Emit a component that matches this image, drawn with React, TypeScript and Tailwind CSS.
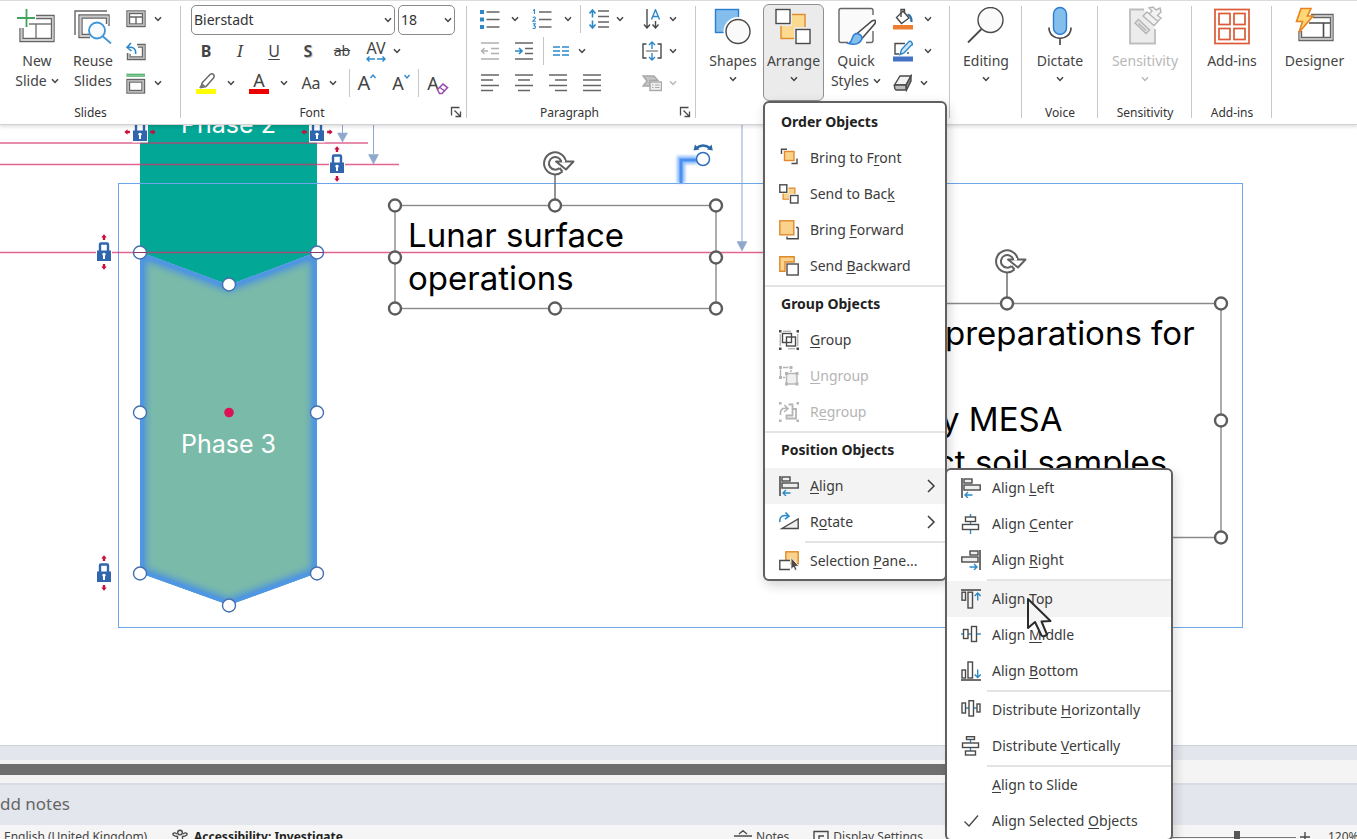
import type { ReactNode } from "react";

const ink = "#4a4a4a";
const blue = "#2b88c9";

function Icon({ box, w, h, children }: { box: string; w: number; h: number; children: ReactNode }) {
  return (
    <svg viewBox={box} width={w} height={h} fill="none" stroke={ink} strokeWidth="1.4" className="shrink-0" aria-hidden="true">
      {children}
    </svg>
  );
}

function Caret({ className = "" }: { className?: string }) {
  return (
    <span className={`inline-flex h-4 shrink-0 items-center justify-center ${className}`}>
      <svg viewBox="0 0 8 6" width="8" height="6" fill="none" stroke="currentColor" strokeWidth="1.5" aria-hidden="true">
        <path d="M1 1.2L4 4.4L7 1.2" />
      </svg>
    </span>
  );
}

function Tool({ label, className = "", children }: { label: string; className?: string; children: ReactNode }) {
  return (
    <button type="button" aria-label={label} className={`flex h-7 shrink-0 items-center justify-center ${className}`}>
      {children}
    </button>
  );
}

function Divider({ className = "" }: { className?: string }) {
  return <span className={`h-7 w-px shrink-0 bg-[#c6c6c6] ${className}`} />;
}

function Group({ name, className = "", launcher, children }: { name?: string; className?: string; launcher?: string; children: ReactNode }) {
  return (
    <section className={`relative flex shrink-0 flex-col pt-0.5 ${className}`}>
      <div className="flex h-24">{children}</div>
      <div className={`mt-1 h-5 text-center text-xs leading-5 text-[#333] ${launcher ? "pr-6" : ""}`}>{name}</div>
      {launcher && <Launcher label={launcher} />}
      <span className="absolute right-0 top-[5px] h-28 w-px bg-[#c8c8c8]" />
    </section>
  );
}

function BigButton({ icon, children, pressed = false, className = "" }: { icon: ReactNode; children: ReactNode; pressed?: boolean; className?: string }) {
  return (
    <button
      type="button"
      className={`flex shrink-0 flex-col items-center rounded-md text-sm leading-5 ${pressed ? "h-[97px] border border-[#8f8f8f] bg-[#ebebeb] pt-[3px]" : "h-24 pt-[5px]"} ${className}`}
    >
      <span className="flex h-9 items-center justify-center">{icon}</span>
      <span className="mt-[7px] flex flex-col items-center whitespace-nowrap">{children}</span>
    </button>
  );
}

/* ---------- menu parts ---------- */

function MenuItem({ icon, children, disabled = false, active = false, arrow = false }: { icon?: ReactNode; children: ReactNode; disabled?: boolean; active?: boolean; arrow?: boolean }) {
  return (
    <button
      type="button"
      role="menuitem"
      disabled={disabled}
      className={`flex h-9 w-full items-center gap-[11px] whitespace-nowrap pl-3.5 pr-[9px] text-left text-sm ${disabled ? "text-[#b4b4b4]" : "text-[#3c3c3c]"} ${active ? "bg-[#f3f3f3]" : ""}`}
    >
      <span className="flex h-5 w-5 shrink-0 items-center">{icon}</span>
      <span className="grow">{children}</span>
      {arrow && (
        <svg viewBox="0 0 10 14" width="10" height="14" fill="none" stroke="#3c3c3c" strokeWidth="1.5" aria-hidden="true">
          <path d="M2 1L8 7L2 13" />
        </svg>
      )}
    </button>
  );
}

function MenuHeading({ children }: { children: ReactNode }) {
  return <div className="flex h-[35px] items-center px-4 pb-0.5 text-sm font-bold text-[#222]">{children}</div>;
}

function MenuLine({ inset = false }: { inset?: boolean }) {
  return (
    <div className={`flex h-[3px] items-center ${inset ? "pl-10" : ""}`}>
      <span className="h-0.5 w-full bg-[#e4e4e4]" />
    </div>
  );
}

function K({ children }: { children: ReactNode }) {
  return <span className="underline underline-offset-2">{children}</span>;
}

function M({ children, color = ink }: { children: ReactNode; color?: string }) {
  return (
    <svg viewBox="0 0 20 20" width="20" height="20" fill="none" stroke={color} strokeWidth="1.4" aria-hidden="true">
      {children}
    </svg>
  );
}

const orangeFill = "#fbd28b";
const orange = "#e08a2c";

const icons = {
  front: (
    <M>
      <path d="M2.5 6V1.2H8M18 10.500V15.500H12.500" />
      <rect x="5.500" y="3.500" width="9.500" height="9" fill={orangeFill} stroke={orange} />
    </M>
  ),
  back: (
    <M>
      <path d="M9.5 4.200H15.800V10M4.200 9.500V15H10" stroke={orange} />
      <path d="M9.500 4.800H15.200V10H10V14.500H4.800V9.500H9.500z" fill={orangeFill} stroke="none" />
      <rect x="0.8" y="0.8" width="7" height="7.5" fill="#fff" />
      <rect x="11.5" y="11.5" width="7.5" height="7.5" fill="#fff" />
    </M>
  ),
  forward: (
    <M>
      <path d="M19.200 7.500V18.800H8V16.500M19.200 7.500H17" />
      <rect x="0.8" y="0.8" width="14" height="14" fill={orangeFill} stroke={orange} />
    </M>
  ),
  backward: (
    <M>
      <path d="M0.800 0.800H15.200V6H6V15.200H0.800z" fill={orangeFill} stroke={orange} />
      <rect x="8" y="8" width="11.200" height="11" fill="#fff" />
    </M>
  ),
  group: (
    <M>
      <path d="M4 1.200H12M1.200 4V16M18.800 4V16M9 18.800H16" strokeWidth="1" stroke="#9a9a9a" />
      <rect x="3.500" y="3.500" width="9" height="9" />
      <rect x="7.500" y="7" width="9" height="9" />
      <path d="M0 0h2.500v2.500H0zM17.500 0H20v2.500h-2.500zM0 17.500h2.500V20H0zM17.500 17.500H20V20h-2.500z" fill={ink} stroke="none" />
    </M>
  ),
  ungroup: (
    <M color="#b4b4b4">
      <path d="M1.500 3.500V10M4 1.500H9.500M12 4V6M4 11.500H6" />
      <rect x="7.500" y="7.500" width="10.500" height="10.500" fill="#f0f0f0" />
      <path d="M0 0h3v3H0zM10.500 0h3v3h-3zM0 10h3v3H0zM6 16.500h3v3H6zM16.500 6h3v3h-3zM16.500 16.500h3v3h-3zM6 6h3v3H6z" fill="#b4b4b4" stroke="none" />
    </M>
  ),
  regroup: (
    <M color="#b4b4b4">
      <path d="M9.500 2.500H13.500V7H17V16.500H7.500V13.500H13.500V7" fill="none" strokeWidth="1.800" />
      <path d="M1.500 13C1 7.500 3 5.500 8.500 6.500M5.500 3L9 6.700L5 10" strokeWidth="1.600" />
      <path d="M0 0h2.500v2.500H0zM17.500 0H20v2.500h-2.500zM0 17.500h2.500V20H0zM17.500 17.500H20V20h-2.500z" fill="#b4b4b4" stroke="none" />
    </M>
  ),
  left: (
    <M>
      <path d="M1 0V20" strokeWidth="1.600" />
      <rect x="3" y="1" width="8" height="4" fill="#eee" />
      <rect x="3" y="7" width="16.200" height="5" fill="#eee" />
      <path d="M11.500 17H4M7 14L4 17L7 20" stroke={blue} />
    </M>
  ),
  center: (
    <M>
      <path d="M9.500 0V20" stroke={blue} />
      <rect x="4.500" y="3" width="10" height="4.500" fill="#fff" />
      <rect x="1.500" y="10.500" width="16" height="5" fill="#fff" />
    </M>
  ),
  right: (
    <M>
      <path d="M19 0V20" strokeWidth="1.600" />
      <rect x="9" y="1" width="8" height="4" fill="#eee" />
      <rect x="0.800" y="7" width="16.200" height="5" fill="#eee" />
      <path d="M8.500 17H16M13 14L16 17L13 20" stroke={blue} />
    </M>
  ),
  top: (
    <M>
      <path d="M0 1H20" strokeWidth="1.600" />
      <rect x="1" y="3.200" width="3.500" height="8" />
      <rect x="7" y="3.200" width="4.500" height="15.800" />
      <path d="M16.700 11.500V4M13.700 7L16.700 4L19.700 7" stroke={blue} />
    </M>
  ),
  middle: (
    <M>
      <path d="M0 9H20" stroke={blue} />
      <rect x="2.500" y="4.500" width="4.500" height="9" fill="#fff" />
      <rect x="10.500" y="1.500" width="5" height="15" fill="#fff" />
    </M>
  ),
  bottom: (
    <M>
      <path d="M0 19H20" strokeWidth="1.600" />
      <rect x="1" y="9" width="3.500" height="8" />
      <rect x="7" y="1" width="4.500" height="16" />
      <path d="M16.700 8.500V16.500M13.700 13.500L16.700 16.500L19.700 13.500" stroke={blue} />
    </M>
  ),
  horizontal: (
    <M>
      <path d="M4 8H16" stroke={blue} />
      <rect x="1" y="3" width="3.500" height="10" fill="#fff" />
      <rect x="8" y="0.700" width="4.500" height="15.300" fill="#fff" />
      <rect x="16" y="4" width="3" height="8" fill="#fff" />
    </M>
  ),
  vertical: (
    <M>
      <path d="M9.500 3V16" stroke={blue} />
      <rect x="5.500" y="0.700" width="8" height="2.800" fill="#fff" />
      <rect x="1.500" y="7" width="16" height="4.500" fill="#fff" />
      <rect x="4.500" y="15" width="10" height="4" fill="#fff" />
    </M>
  ),
  rotate: (
    <M>
      <path d="M19.200 7V16.500H3z" fill="#eee" />
      <path d="M1 10C0 4.500 4 2.500 9.500 4M6.500 0.500L10 4.200L6 7.200" stroke={blue} strokeWidth="1.600" />
    </M>
  ),
  pane: (
    <M>
      <rect x="6.800" y="0.800" width="12.400" height="12" fill={orangeFill} stroke={orange} />
      <path d="M11 9.500H0.800V18.500H11" fill="#fff" />
      <path d="M12 6.500V18.500L14.500 16L16 19.500L18 18.500L16.500 15.300H20z" fill={ink} stroke="#fff" strokeWidth="0.800" />
    </M>
  ),
  check: (
    <M>
      <path d="M3.500 10.500L8 15L17 4.500" />
    </M>
  ),
};

function Pointer() {
  return (
    <svg viewBox="0 0 26 42" width="26" height="42" className="pointer-events-none absolute left-[79px] top-4 z-10" aria-hidden="true">
      <path d="M2 2V31L9 25L15.500 38.500Q18 40.500 21 37.500L15.500 24.500L24.500 24z" fill="#f5f5f5" stroke="#2b2b2b" strokeWidth="2" strokeLinejoin="round" />
    </svg>
  );
}

function AlignMenu() {
  return (
    <div role="menu" aria-label="Align" className="absolute left-full top-0 w-[228px] rounded-md border-2 border-[#606060] bg-white shadow-[4px_4px_10px_rgba(0,0,0,0.12)]">
      <MenuItem icon={icons.left}>Align <K>L</K>eft</MenuItem>
      <MenuItem icon={icons.center}>Align <K>C</K>enter</MenuItem>
      <MenuItem icon={icons.right}>Align <K>R</K>ight</MenuItem>
      <MenuLine inset />
      <div className="relative">
        <MenuItem icon={icons.top} active>Align <K>T</K>op</MenuItem>
        <Pointer />
      </div>
      <MenuItem icon={icons.middle}>Align <K>M</K>iddle</MenuItem>
      <MenuItem icon={icons.bottom}>Align <K>B</K>ottom</MenuItem>
      <MenuLine inset />
      <MenuItem icon={icons.horizontal}>Distribute <K>H</K>orizontally</MenuItem>
      <MenuItem icon={icons.vertical}>Distribute <K>V</K>ertically</MenuItem>
      <MenuLine inset />
      <MenuItem><K>A</K>lign to Slide</MenuItem>
      <MenuItem icon={icons.check}>Align Selected <K>O</K>bjects</MenuItem>
    </div>
  );
}

function ArrangeMenu() {
  return (
    <div role="menu" aria-label="Arrange" className="absolute left-0 top-full w-[184px] rounded-md border-2 border-[#606060] bg-white pt-0.5 shadow-[2px_4px_12px_rgba(0,0,0,0.18)]">
      <MenuHeading>Order Objects</MenuHeading>
      <MenuItem icon={icons.front}>Bring to F<K>r</K>ont</MenuItem>
      <MenuItem icon={icons.back}>Send to Bac<K>k</K></MenuItem>
      <MenuItem icon={icons.forward}>Bring <K>F</K>orward</MenuItem>
      <MenuItem icon={icons.backward}>Send <K>B</K>ackward</MenuItem>
      <MenuLine />
      <MenuHeading>Group Objects</MenuHeading>
      <MenuItem icon={icons.group}><K>G</K>roup</MenuItem>
      <MenuItem icon={icons.ungroup} disabled><K>U</K>ngroup</MenuItem>
      <MenuItem icon={icons.regroup} disabled>R<K>e</K>group</MenuItem>
      <MenuLine />
      <MenuHeading>Position Objects</MenuHeading>
      <div className="relative">
        <MenuItem icon={icons.left} active arrow><K>A</K>lign</MenuItem>
        <AlignMenu />
      </div>
      <MenuItem icon={icons.rotate} arrow>R<K>o</K>tate</MenuItem>
      <MenuLine inset />
      <MenuItem icon={icons.pane}>Selection <K>P</K>ane...</MenuItem>
    </div>
  );
}

/* ---------- ribbon ---------- */

function SlidesGroup() {
  return (
    <Group name="Slides" className="w-[181px]">
      <BigButton
        className="ml-[9px] w-14"
        icon={
          <Icon box="17 8 40 36" w={40} h={36}>
            <path d="M36 15.500H54V41.500H20V28M36 18.500H51.500V38.500H23V28" stroke="#666" />
            <path d="M36 17H52.800V40H21.500V28" stroke="#c9c9c9" />
            <path d="M36 24H51M36 24V38M29 24H36" stroke="#777" />
            <path d="M26.500 9V27M17 18H35" stroke="#3fa55b" strokeWidth="1.800" />
          </Icon>
        }
      >
        <span>New</span>
        <span className="flex items-center gap-1">Slide <Caret /></span>
      </BigButton>
      <BigButton
        className="w-14"
        icon={
          <Icon box="74 12 40 36" w={40} h={36}>
            <path d="M76 39V15H108" stroke="#666" />
            <path d="M91 41.500H80V19H110V30M91 38.500H83V22H107.500V28" stroke="#666" />
            <path d="M91 40H81.500V20.500H108.800V28" stroke="#c9c9c9" />
            <circle cx="98" cy="34.500" r="8" fill="#f7fbff" stroke="#3d94d6" strokeWidth="1.800" />
            <path d="M104 40.500L112 47.500" stroke="#3d94d6" strokeWidth="1.800" />
          </Icon>
        }
      >
        <span>Reuse</span>
        <span>Slides</span>
      </BigButton>
      <div className="ml-[3px] flex flex-col">
        <span className="flex h-8 items-center">
          <Tool label="Layout" className="w-6">
            <Icon box="126 10 20 18" w={20} h={18}>
              <rect x="127" y="11" width="18" height="15.500" stroke="#666" />
              <rect x="129.500" y="13.500" width="13" height="10.500" stroke="#666" />
              <rect x="128.200" y="12.200" width="15.600" height="13" stroke="#b9b9b9" />
              <path d="M129.500 17H142.500M136 17V24" stroke="#666" />
            </Icon>
          </Tool>
          <Caret className="w-5" />
        </span>
        <span className="flex h-8 items-center">
          <Tool label="Reset" className="w-6">
            <Icon box="126 41 20 19" w={20} h={19}>
              <path d="M137 43.500H145V58.500H127.500V52M138 46H142.500V56H130V53" stroke="#666" />
              <path d="M138 44.800H143.800V57.200H128.800V52" stroke="#b9b9b9" />
              <path d="M135.500 53C136.500 47.500 133 45.500 127.500 46.500M131 42L127 46.400L131.500 50" stroke={blue} strokeWidth="1.600" />
            </Icon>
          </Tool>
        </span>
        <span className="flex h-8 items-center">
          <Tool label="Section" className="w-6">
            <Icon box="126 73 20 21" w={20} h={21}>
              <path d="M126.500 75.200H145" stroke="#3fa55b" strokeWidth="3" />
              <path d="M126.500 75.200H145" stroke="#9fd5ad" strokeWidth="1" />
              <rect x="127" y="79.500" width="17.500" height="13.500" stroke="#666" />
              <rect x="129.500" y="82" width="12.500" height="8.500" stroke="#666" />
              <rect x="128.200" y="80.700" width="15" height="11" stroke="#b9b9b9" />
            </Icon>
          </Tool>
          <Caret className="w-5" />
        </span>
      </div>
    </Group>
  );
}

function Launcher({ label }: { label: string }) {
  return (
    <button type="button" aria-label={label} className="absolute bottom-1.5 right-[5px]">
      <svg viewBox="0 0 12 12" width="12" height="12" fill="none" stroke={ink} strokeWidth="1.300" aria-hidden="true">
        <path d="M1.500 9.500V1.500H9.500M4.500 4.500L10.500 10.500M10.500 5.500V10.500H5.500" />
      </svg>
    </button>
  );
}

function Picker({ label, value, className }: { label: string; value: string; className: string }) {
  return (
    <label className={`relative flex h-[30px] items-center ${className}`}>
      <select aria-label={label} defaultValue={value} className="h-full w-full appearance-none rounded-[5px] border border-[#8a8a8a] bg-white pl-0.5 text-sm text-[#333]">
        <option>{value}</option>
      </select>
      <Caret className="pointer-events-none absolute right-[3px] w-2" />
    </label>
  );
}

function FontGroup() {
  return (
    <Group name="Font" launcher="Font settings" className="w-[286px]">
      <div className="ml-2 flex w-[270px] flex-col">
        <div className="flex h-8 items-end gap-[3px] pl-0.5">
          <Picker label="Font name" value="Bierstadt" className="w-[204px]" />
          <Picker label="Font size" value="18" className="w-[57px]" />
        </div>
        <div className="flex h-8 items-center text-base">
          <Tool label="Bold" className="w-[34px] font-bold">B</Tool>
          <Tool label="Italic" className="w-[34px] font-['Noto_Serif','Liberation_Serif',serif] italic">I</Tool>
          <Tool label="Underline" className="w-[34px] underline underline-offset-2">U</Tool>
          <Tool label="Text shadow" className="w-[34px] font-semibold [text-shadow:1px_1px_1px_#bbb]">S</Tool>
          <Tool label="Strikethrough" className="w-[34px] text-sm line-through">ab</Tool>
          <Tool label="Character spacing" className="w-[34px] flex-col leading-4">
            <span className="text-base leading-4">AV</span>
            <Icon box="0 0 20 6" w={20} h={6}>
              <path d="M9 3H1M3.500 0.500L1 3L3.500 5.500M11 3H19M16.500 0.500L19 3L16.500 5.500" stroke={blue} />
            </Icon>
          </Tool>
          <Caret className="w-2" />
        </div>
        <div className="flex h-8 items-center text-base">
          <Tool label="Text highlight color" className="w-[34px]">
            <Icon box="196 72 20 23" w={20} h={23}>
              <path d="M202 83L210 74.500Q212 73 213.500 74.500T213.500 78L206 86.500L201 87.500z" fill="#fff" stroke="#666" />
              <path d="M202 83L206 86.500L199 88z" fill="#777" stroke="none" />
              <rect x="196" y="89" width="20" height="5" fill="#ffff00" stroke="none" />
            </Icon>
          </Tool>
          <Caret className="w-4" />
          <Tool label="Font color" className="w-10 flex-col">
            <span className="text-lg leading-[17px]">A</span>
            <span className="h-[5px] w-5 bg-[#ee0000]" />
          </Tool>
          <Caret className="w-2.5" />
          <Tool label="Change case" className="ml-1 w-9">Aa</Tool>
          <Caret className="w-2" />
          <Divider className="ml-3 mr-2" />
          <Tool label="Increase font size" className="w-[18px]">
            <span className="text-xl leading-6">A</span>
            <Icon box="0 0 6 20" w={6} h={20}><path d="M0.500 5L3 2L5.500 5" stroke={blue} /></Icon>
          </Tool>
          <Tool label="Decrease font size" className="ml-4 w-[18px]">
            <span className="text-lg leading-6">A</span>
            <Icon box="0 0 6 20" w={6} h={20}><path d="M0.500 2L3 5L5.500 2" stroke={blue} /></Icon>
          </Tool>
          <Divider className="ml-2 mr-2" />
          <Tool label="Clear formatting" className="relative w-5">
            <span className="-ml-2 text-lg leading-6">A</span>
            <span className="absolute -right-0.5 bottom-0.5">
              <Icon box="0 0 13 13" w={13} h={13}>
                <path d="M1.500 7.500L7 2L11.500 5.500L6 11.500L3.500 11.500z" fill="#fff" stroke="#9b4fb0" strokeWidth="1.600" />
                <path d="M4 5.500L8.500 9" stroke="#9b4fb0" />
              </Icon>
            </span>
          </Tool>
        </div>
      </div>
    </Group>
  );
}

function Lines({ d, color = "#666" }: { d: string; color?: string }) {
  return (
    <Icon box="0 0 20 20" w={20} h={20}>
      <path d={d} stroke={color} strokeWidth="1.600" />
    </Icon>
  );
}

function ParagraphGroup() {
  return (
    <Group name="Paragraph" launcher="Paragraph settings" className="w-[229px]">
      <div className="ml-1.5 flex w-[204px] flex-col">
        <div className="flex h-8 items-center">
          <Tool label="Bullets" className="w-[33px]">
            <Icon box="0 0 20 20" w={20} h={20}>
              <path d="M6.500 3H19.500M6.500 10.500H19.500M6.500 18H19.500" stroke="#666" strokeWidth="1.500" />
              <path d="M0 1h4v4H0zM0 8.500h4v4H0zM0 16h4v4H0z" fill={blue} stroke="none" />
            </Icon>
          </Tool>
          <Caret className="w-[18px]" />
          <Tool label="Numbering" className="w-9">
            <Icon box="0 0 20 20" w={20} h={20}>
              <path d="M7 3H19.500M7 10.500H19.500M7 18H19.500" stroke="#666" strokeWidth="1.500" />
              <path d="M1 1.500L2.500 0.700V5M0.800 8.500Q3.500 7.200 3.300 9.500L0.800 12.300H3.800M0.800 14.800H3.200L2 16.800Q4 17 3.200 18.800T0.700 19.300" stroke={blue} strokeWidth="1.100" />
            </Icon>
          </Tool>
          <Caret className="w-4" />
          <Divider className="mx-1" />
          <Tool label="Line spacing" className="w-7">
            <Icon box="0 0 20 20" w={20} h={20}>
              <path d="M9 2H20M9 7.500H20M9 13H20M9 18H20" stroke="#666" strokeWidth="1.500" />
              <path d="M3.500 8.500V1.500M0.500 4.500L3.500 1L6.500 4.500M3.500 11.500V18.500M0.500 15.500L3.500 19L6.500 15.500" stroke={blue} strokeWidth="1.600" />
            </Icon>
          </Tool>
          <Caret className="w-3.5" />
          <span className="ml-auto flex items-center">
            <Tool label="Text direction" className="w-8">
              <Icon box="0 0 18 20" w={18} h={20}>
                <path d="M4 0V19M1 15.500L4 19L7 15.500M12.500 12V19M9.500 15.500L12.500 19L15.500 15.500" />
                <path d="M8.500 10.500L12.500 0.800L16.500 10.500M10 7.500H15" stroke={blue} />
              </Icon>
            </Tool>
            <Caret className="w-[9px]" />
          </span>
        </div>
        <div className="flex h-8 items-center">
          <Tool label="Decrease indent" className="w-[34px]">
            <Icon box="0 0 20 20" w={20} h={20}>
              <path d="M1 2H19M11 7.500H19M11 12.500H19M1 18H19M8 10H1.500M4.500 7L1.500 10L4.500 13" stroke="#b0b0b0" />
            </Icon>
          </Tool>
          <Tool label="Increase indent" className="w-[33px]">
            <Icon box="0 0 20 20" w={20} h={20}>
              <path d="M1 2H19M11 7.500H19M11 12.500H19M1 18H19" stroke="#666" />
              <path d="M1 10H8M5 7L8 10L5 13" stroke={blue} strokeWidth="1.700" />
            </Icon>
          </Tool>
          <Divider className="mx-[3px]" />
          <Tool label="Columns" className="w-7">
            <Icon box="0 0 16 12" w={16} h={12}>
              <path d="M0 2H7M0 6H7M0 10H7M9 2H16M9 6H16M9 10H16" stroke={blue} strokeWidth="1.600" />
            </Icon>
          </Tool>
          <Caret className="w-3.5" />
          <span className="ml-auto flex items-center">
            <Tool label="Align text" className="w-8">
              <Icon box="0 0 20 20" w={20} h={20}>
                <path d="M4.500 3H1V17H4.500M15.500 3H19V17H15.500" />
                <path d="M4 10H16" stroke="#888" />
                <path d="M10 8V1M7 4L10 1L13 4M10 12V19M7 16L10 19L13 16" stroke={blue} />
              </Icon>
            </Tool>
            <Caret className="w-[9px]" />
          </span>
        </div>
        <div className="flex h-8 items-center">
          <Tool label="Align text left" className="w-[34px]"><Lines d="M1 2H19M1 7H13M1 12.500H19M1 17.500H13" /></Tool>
          <Tool label="Center text" className="w-[34px]"><Lines d="M1 2H19M4 7H16M1 12.500H19M4 17.500H16" /></Tool>
          <Tool label="Align text right" className="w-[34px]"><Lines d="M1 2H19M7 7H19M1 12.500H19M7 17.500H19" /></Tool>
          <Tool label="Justify" className="w-[34px]"><Lines d="M1 2H19M1 7H19M1 12.500H19M1 17.500H19" /></Tool>
          <span className="ml-auto flex items-center text-[#b8b8b8]">
            <Tool label="Convert to SmartArt" className="w-8">
              <Icon box="0 0 20 20" w={20} h={20}>
                <path d="M1 3H12L16 7.500H8V13H1L5 8z" fill="#c4c4c4" stroke="#a8a8a8" />
                <rect x="8" y="9" width="11.500" height="8.500" fill="#eee" stroke="#a8a8a8" />
                <path d="M10 12H11.500M13 12H17.500M10 14.500H11.500M13 14.500H17.500" stroke="#a8a8a8" strokeWidth="1" />
              </Icon>
            </Tool>
            <Caret className="w-[9px]" />
          </span>
        </div>
      </div>
    </Group>
  );
}

function DrawingGroup() {
  return (
    <Group className="w-[254px]">
      <BigButton
        className="ml-[7px] w-[60px]"
        icon={
          <Icon box="714 9 38 38" w={38} h={38}>
            <rect x="715.500" y="11.500" width="23" height="23" fill="#83beec" stroke="#2b7cd3" />
            <circle cx="738" cy="33.500" r="14.500" fill="#fff" stroke="none" />
            <circle cx="738" cy="33.500" r="12" fill="#fafafa" />
          </Icon>
        }
      >
        <span>Shapes</span>
        <Caret />
      </BigButton>
      <div className="relative z-20 mt-px h-[97px]">
        <BigButton
          pressed
          className="w-[61px]"
          icon={
            <Icon box="775 10 37 37" w={37} h={37}>
              <rect x="781" y="16.500" width="24" height="24" fill="#fbd98f" stroke={orange} />
              <path d="M774 9H792V28H774zM794 29H813V48H794z" fill="#ebebeb" stroke="none" />
              <rect x="776" y="11.500" width="14" height="14" fill="#fff" />
              <rect x="796" y="31.500" width="14" height="14" fill="#fff" />
            </Icon>
          }
        >
          <span>Arrange</span>
          <Caret />
        </BigButton>
        <ArrangeMenu />
      </div>
      <BigButton
        className="w-16"
        icon={
          <Icon box="836 10 40 38" w={40} h={38}>
            <path d="M848 45.500H841Q839 45.500 839 43.500V13.500Q839 11.500 841 11.500H871Q873 11.500 873 13.500V18M873 34V43.500Q873 45.500 871 45.500H866" fill="#fafafa" stroke="#666" />
            <path d="M856.500 37L872 24Q876.500 21.500 875 26.500L862 41.500z" fill="#fff" strokeWidth="1.600" />
            <path d="M848.500 46.500C853 45 851 38 856 36.500Q861 36.500 862 41C861 46.500 855 48.500 848.500 46.500z" fill="#83beec" stroke="#2b7cd3" />
          </Icon>
        }
      >
        <span>Quick</span>
        <span className="flex items-center gap-1">Styles <Caret /></span>
      </BigButton>
      <div className="flex flex-col">
        <span className="flex h-8 items-center">
          <Tool label="Shape fill" className="w-[30px]">
            <Icon box="893 8 20 22" w={20} h={22}>
              <path d="M903 11L909 18L901.500 23.500L896.500 17.500z" fill="#fff" />
              <path d="M901 17V9.500H904.500V13" />
              <path d="M907.500 14.500Q911.500 15 911.500 22" stroke="#2b6fa8" strokeWidth="2.200" />
              <rect x="893" y="25" width="20" height="4.500" fill="#ed7d31" stroke="none" />
            </Icon>
          </Tool>
          <Caret className="w-5" />
        </span>
        <span className="flex h-8 items-center">
          <Tool label="Shape outline" className="w-[30px]">
            <Icon box="893 40 20 22" w={20} h={22}>
              <path d="M905 43.500H895V54H899M908 52V54" />
              <path d="M900 54.500L901.500 49.500L909 41.500Q911 40.500 912 43T911.500 45L904 53z" fill="#cfe4f7" stroke={blue} />
              <rect x="893" y="56.500" width="20" height="5" fill="#4472c4" stroke="none" />
            </Icon>
          </Tool>
          <Caret className="w-5" />
        </span>
        <span className="flex h-8 items-center">
          <Tool label="Shape effects" className="w-[30px]">
            <Icon box="893 74 20 18" w={20} h={18}>
              <path d="M894.500 85L900 76H911L906 85z" fill="#f2f2f2" />
              <path d="M906 85L911 76V81L906.500 90z" fill="#888" />
              <path d="M894.500 85H906V90H896Q894.500 89 894.500 87z" fill="#bdbdbd" />
            </Icon>
          </Tool>
          <Caret className="w-3" />
        </span>
      </div>
    </Group>
  );
}

function Ribbon() {
  return (
    <header className="relative z-10 flex h-[125px] shrink-0 border-b border-t border-b-[#d2d2d2] border-t-[#dcdcdc] bg-white text-[#444] shadow-[0_2px_3px_rgba(0,0,0,0.12)]">
      <SlidesGroup />
      <FontGroup />
      <ParagraphGroup />
      <DrawingGroup />
      <Group className="w-[72px]">
        <BigButton
          className="w-full"
          icon={
            <Icon box="966 9 38 38" w={38} h={38}>
              <circle cx="989.500" cy="22" r="12.500" fill="#fafafa" />
              <path d="M980.500 31L967 44.500" strokeWidth="1.800" />
            </Icon>
          }
        >
          <span>Editing</span>
          <Caret />
        </BigButton>
      </Group>
      <Group name="Voice" className="w-[76px]">
        <BigButton
          className="w-full"
          icon={
            <Icon box="1046 8 28 40" w={28} h={40}>
              <rect x="1053.500" y="9.500" width="13" height="27" rx="6.500" fill="#83beec" stroke="#2b7cd3" />
              <path d="M1049 29.500C1049 44 1071 44 1071 29.500M1060 40.500V47" strokeWidth="1.700" />
            </Icon>
          }
        >
          <span>Dictate</span>
          <Caret />
        </BigButton>
      </Group>
      <Group name="Sensitivity" className="w-[94px]">
        <BigButton
          className="w-full text-[#b8b8b8]"
          icon={
            <Icon box="1128 8 38 40" w={38} h={40}>
              <path d="M1146 11.500H1132V45.500H1157V31" fill="#ececec" stroke="#bdbdbd" strokeWidth="1.800" />
              <path d="M1137 25L1140.500 21.500L1151.500 32L1148 35.500z" fill="#e2e2e2" stroke="#b5b5b5" />
              <path d="M1140.500 25.500L1148 32.500" stroke="#b5b5b5" />
              <path d="M1145 18L1149 14L1160 23.500L1156 27.500zM1151 16L1154 13L1151 10L1155 9L1158 12L1162 10L1163 14L1159.500 17.500L1163 20L1160 23" fill="#f2f2f2" stroke="#b5b5b5" />
            </Icon>
          }
        >
          <span>Sensitivity</span>
          <Caret />
        </BigButton>
      </Group>
      <Group name="Add-ins" className="w-20">
        <BigButton
          className="w-full"
          icon={
            <Icon box="1213 9 38 38" w={38} h={38}>
              <g stroke="#dd5a38" strokeWidth="1.700" fill="#fff">
                <rect x="1215" y="11.500" width="34" height="34" />
                <rect x="1219" y="15.500" width="11" height="11" />
                <rect x="1234" y="15.500" width="11" height="11" />
                <rect x="1219" y="30.500" width="11" height="11" />
                <rect x="1234" y="30.500" width="11" height="11" />
              </g>
            </Icon>
          }
        >
          <span>Add-ins</span>
        </BigButton>
      </Group>
      <div className="min-w-20 flex-1 pt-0.5">
        <BigButton
          className="w-full"
          icon={
            <Icon box="1294 8 40 38" w={40} h={38}>
              <path d="M1310 15.500H1332V41.500H1298V32M1312 18.500H1329.500V38.500H1300.500V32" stroke="#666" />
              <path d="M1311 17H1330.800V40H1299.300V32" stroke="#b9b9b9" />
              <path d="M1308 24H1329M1322.500 24V38" strokeWidth="1.600" />
              <path d="M1300 9.500H1310L1306.500 17H1312L1298 33.500L1301.500 22.500H1295.500z" fill="#ffd777" stroke="#e8821e" strokeWidth="1.600" />
            </Icon>
          }
        >
          <span>Designer</span>
        </BigButton>
      </div>
    </header>
  );
}

/* ---------- slide canvas ---------- */

function Lock({ x, y, vertical = false }: { x: number; y: number; vertical?: boolean }) {
  const head = "M-4 0L0 -3.500V-1.500H3V1.500H0V3.500z";
  return (
    <g transform={`translate(${x} ${y})`}>
      <rect x="-8" y="-10.500" width="16" height="21" fill="#fff" />
      <path d="M-4 0V-7.500Q-4 -8.500 -3 -8.500H3Q4 -8.500 4 -7.500V0" fill="none" stroke="#2f66ad" strokeWidth="2.400" />
      <rect x="-7" y="-1.500" width="14" height="10.500" fill="#2f66ad" />
      <path d="M-1.800 2.500A1.800 1.800 0 1 1 1.800 2.500L1 3.500V7H-1V3.500z" fill="#fff" />
      <g fill="#c8103e">
        <path d={head} transform={vertical ? "translate(0 -14.500) rotate(90) scale(.8)" : "translate(-12.500 0) scale(.8)"} />
        <path d={head} transform={vertical ? "translate(0 14.500) rotate(-90) scale(.8)" : "translate(12.500 0) rotate(180) scale(.8)"} />
      </g>
    </g>
  );
}

function RotateHandle({ x, y }: { x: number; y: number }) {
  return (
    <g transform={`translate(${x} ${y})`} fill="none">
      <path d="M7.500 8.500A11 11 0 1 1 10.800 -2" stroke="#606060" strokeWidth="2" />
      <path d="M4.500 5A6.300 6.300 0 1 1 6.300 -1.500" stroke="#606060" strokeWidth="2" />
      <path d="M4.500 5L7.500 8.500" stroke="#606060" strokeWidth="2" />
      <path d="M1 -1.500H18.500L11 6.500z" fill="#fff" stroke="#606060" strokeWidth="2" strokeLinejoin="round" />
      <path d="M7 -1.700H10" stroke="#fff" strokeWidth="2.500" />
    </g>
  );
}

const shapeHandles = [[140, 252], [317, 252], [229, 284], [140, 412], [317, 412], [140, 573], [317, 573], [229, 605]];
const boxHandles = [[395, 205], [555, 205], [716, 205], [395, 257], [716, 257], [395, 308], [555, 308], [716, 308], [1007, 303], [1221, 303], [1221, 420], [1221, 537]];
const phase3 = "M140 252L229 285L317 252V573L229 605L140 573z";

function Canvas() {
  return (
    <main className="relative min-h-0 flex-1 overflow-hidden bg-white font-[Inter,'Liberation_Sans',sans-serif] text-black">
      <svg className="absolute inset-0 h-full w-full" aria-hidden="true">
        <defs>
          <clipPath id="phase3-clip"><path d={phase3} /></clipPath>
          <filter id="glow" x="-20%" y="-20%" width="140%" height="140%"><feGaussianBlur stdDeviation="3.500" /></filter>
          <filter id="soft" filterUnits="userSpaceOnUse" x="660" y="140" width="60" height="60"><feGaussianBlur stdDeviation="1.500" /></filter>
        </defs>
        <g transform="translate(0 -125)">
          <path d="M140 100H317V252L229 285L140 252z" fill="#02a795" />
          <path d={phase3} fill="#7abaa9" />
          <g clipPath="url(#phase3-clip)">
            <path d={phase3} fill="none" stroke="#4a90e2" strokeWidth="12" filter="url(#glow)" />
            <path d={phase3} fill="none" stroke="#4f97e3" strokeWidth="7" />
          </g>
          <rect x="118.500" y="183.500" width="1124" height="444" fill="none" stroke="#6ea6ea" />
          <path d="M0 143H368M0 164.500H399M0 252.500H763" stroke="#d6336c" strokeOpacity="0.750" strokeWidth="1.500" />
          <g stroke="#8fa9cc" fill="#8fa9cc">
            <path d="M342.500 100V133M373.500 100V154M742 100V242" />
            <path d="M337.500 133H347.500L342.500 142zM368.500 154.500H378.500L373.500 164zM737 241.500H747L742 251z" strokeWidth="0.500" />
          </g>
          <path d="M681 183V160H697" fill="none" stroke="#8dbcfa" strokeWidth="8" filter="url(#soft)" />
          <path d="M681 183V160H697" fill="none" stroke="#4b8ff0" strokeWidth="3" />
          <circle cx="703" cy="159" r="6.500" fill="#fff" stroke="#2f6fc0" strokeWidth="1.500" />
          <path d="M696 148.500Q703 142.500 710.500 148.500" fill="none" stroke="#2b68a8" strokeWidth="2.400" />
          <path d="M693.500 150.500L695 144.500L699.500 149.500zM712.800 150.500L711.500 144.500L707 149.500z" fill="#2b68a8" />
          <g fill="none" stroke="#8a8a8a" strokeWidth="1.400">
            <rect x="395" y="205.500" width="321" height="103" />
            <path d="M793 303.500H1221V537.500H793z" />
            <path d="M555 174V205M1007 272V303" stroke="#666" />
          </g>
          <g fill="#fff" stroke="#5c5c5c" strokeWidth="2.400">
            {boxHandles.map(([x, y]) => <circle key={`${x}-${y}`} cx={x} cy={y + 0.5} r="6" />)}
          </g>
          <g fill="#fff" stroke="#466fb0" strokeWidth="1.400">
            {shapeHandles.map(([x, y]) => <circle key={`${x}-${y}`} cx={x} cy={y + 0.5} r="6.500" />)}
          </g>
          <path d="M134 252.500H146M311 252.500H323" stroke="#8a3568" strokeWidth="1" />
          <circle cx="229" cy="412.500" r="4.800" fill="#dc1257" />
          <RotateHandle x={555} y={163} />
          <RotateHandle x={1007} y={261} />
          <Lock x={140} y={132} />
          <Lock x={317} y={132} />
          <Lock x={337} y={164} vertical />
          <Lock x={104} y={252} vertical />
          <Lock x={104} y={573} vertical />
        </g>
      </svg>
      <p className="absolute left-[140px] top-[-17px] w-[177px] text-center text-[25px] leading-8 text-white">Phase 2</p>
      <p className="absolute left-[140px] top-[303px] w-[177px] text-center text-[25px] leading-8 text-white">Phase 3</p>
      <p className="absolute left-[408px] top-[89px] w-[290px] text-[33px] leading-[43px]">Lunar surface operations</p>
      <p className="absolute left-[945px] top-[187px] whitespace-nowrap text-[33px] leading-[43px]">preparations for</p>
      <p className="absolute left-[941px] top-[273px] whitespace-nowrap text-[33px] leading-[43px]">y MESA</p>
      <p className="absolute left-[936px] top-[316px] whitespace-nowrap text-[33px] leading-[43px]">ct soil samples</p>
    </main>
  );
}

function Footer() {
  return (
    <>
      <div className="h-[15px] shrink-0 border-t border-[#d0d3da] bg-[#e4e6ee]" />
      <div className="flex h-[23px] shrink-0 items-start bg-[#f4f4f4] pt-1">
        <div className="h-[11px] w-3/4 bg-[#6e6e6e]" />
      </div>
      <label className="flex h-[42px] shrink-0 items-center border-t-2 border-[#d8dce4] bg-[#e4e6ed]">
        <input aria-label="Notes" defaultValue="dd notes" className="w-full bg-transparent pb-0.5 text-[17px] text-[#666]" />
      </label>
      <footer className="h-3.5 shrink-0 overflow-hidden bg-[#f5f5f5] text-xs text-[#444]">
        <div className="flex h-6 items-center pl-1">
          <button type="button" className="w-[168px] whitespace-nowrap text-left">English (United Kingdom)</button>
          <button type="button" className="flex items-center gap-1.5 whitespace-nowrap font-bold text-[#222]">
            <Icon box="0 0 16 16" w={16} h={16}>
              <circle cx="8" cy="3.500" r="2.300" />
              <path d="M1 4.500Q0.500 7 5.500 7.500V14M15 4.500Q15.500 7 10.500 7.500V10M1 4.500Q2.500 3 5 5M15 4.500Q13.500 3 11 5" />
            </Icon>
            Accessibility: Investigate
          </button>
          <span className="ml-auto flex items-center">
            <button type="button" className="flex items-center gap-1">
              <Icon box="0 0 18 14" w={18} h={14}><path d="M5 4L9 0.800L13 4M0 6H18M3 10H15" /></Icon>
              Notes
            </button>
            <button type="button" className="ml-6 flex items-center gap-1 whitespace-nowrap">
              <Icon box="0 0 16 14" w={16} h={14}><path d="M15 12V1.500H1V12M6 12V6H11" /></Icon>
              Display Settings
            </button>
            <span className="relative ml-[245px] flex h-6 w-32 items-center">
              <input type="range" aria-label="Zoom" defaultValue={54} className="h-px w-full appearance-none bg-[#777] [&::-webkit-slider-thumb]:h-3 [&::-webkit-slider-thumb]:w-1.5 [&::-webkit-slider-thumb]:appearance-none [&::-webkit-slider-thumb]:bg-[#555]" />
            </span>
            <button type="button" aria-label="Zoom in" className="ml-1 w-5">
              <Icon box="0 0 10 10" w={10} h={10}><path d="M5 0V10M0 5H10" /></Icon>
            </button>
            <span className="w-[37px] overflow-hidden pl-2">120%</span>
          </span>
        </div>
      </footer>
    </>
  );
}

export default function App() {
  return (
    <div className="flex h-screen flex-col overflow-hidden bg-white font-['Noto_Sans','Open_Sans',sans-serif]">
      <Ribbon />
      <Canvas />
      <Footer />
    </div>
  );
}
